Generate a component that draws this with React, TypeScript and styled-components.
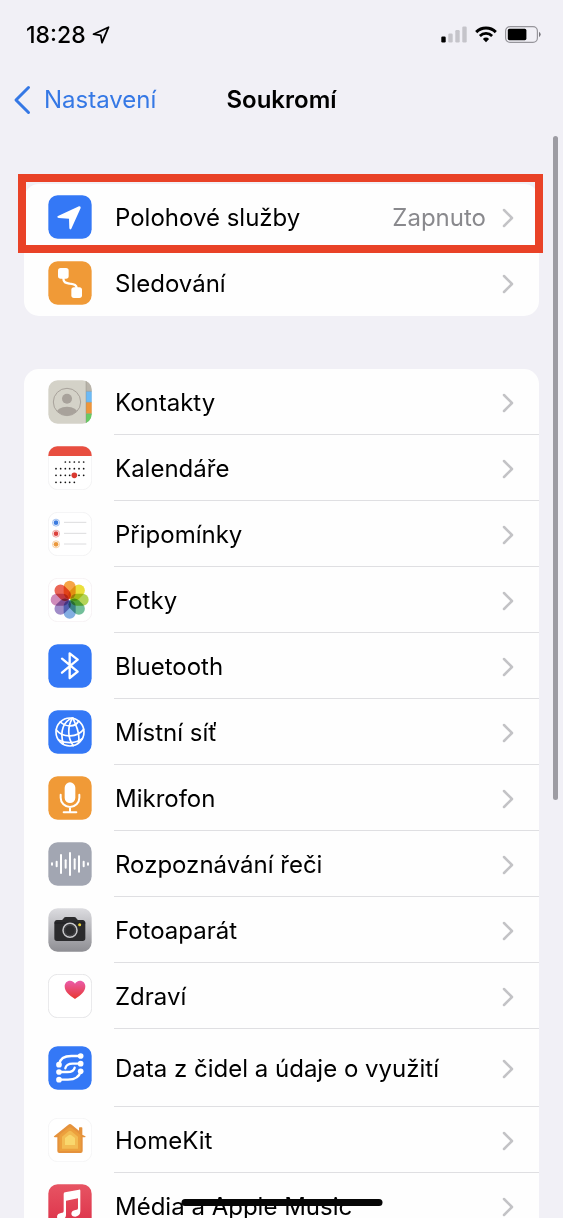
import React from "react";
import styled, { createGlobalStyle } from "styled-components";

const GlobalStyle = createGlobalStyle`
  * { box-sizing: border-box; }
  body { margin: 0; background: #f1f0f6; }
`;

const Screen = styled.div`
  position: relative;
  display: flex;
  flex-direction: column;
  height: 100vh;
  overflow: hidden;
  background: #f1f0f6;
  color: #000;
  font-family: Inter, "Liberation Sans", sans-serif;
`;

const StatusBar = styled.div`
  display: flex;
  align-items: center;
  justify-content: space-between;
  flex: none;
  height: 69px;
  padding: 0 22px 0 26px;
`;

const StatusGroup = styled.div<{ $gap: number }>`
  display: flex;
  align-items: center;
  gap: ${(p) => p.$gap}px;
`;

const Clock = styled.span`
  font-size: 23px;
  font-weight: 500;
  line-height: 28px;
`;

const NavBar = styled.header`
  display: grid;
  grid-template-columns: 1fr auto 1fr;
  align-items: center;
  flex: none;
  height: 61px;
  padding: 0 13px;
`;

const BackLink = styled.a`
  display: flex;
  align-items: center;
  gap: 13px;
  color: #3578e5;
  font-size: 24px;
  line-height: 32px;
  text-decoration: none;
`;

const Title = styled.h1`
  margin: 0;
  font-size: 24px;
  font-weight: 600;
  line-height: 32px;
`;

const Content = styled.main`
  flex: 1;
  min-height: 0;
  padding: 54px 24px 0;
  overflow-y: auto;
  scrollbar-width: none;
`;

const Card = styled.ul`
  margin: 0;
  padding: 0;
  border-radius: 15px;
  background: #fefefe;
  list-style: none;
`;

const Section = styled.section`
  position: relative;
  margin-bottom: 53px;
`;

const Row = styled.a<{ $tall?: boolean }>`
  display: flex;
  align-items: center;
  gap: 22px;
  height: ${(p) => (p.$tall ? 78 : 66)}px;
  padding-left: 24px;
  color: inherit;
  text-decoration: none;
`;

const RowBody = styled.span`
  display: flex;
  align-items: center;
  gap: 16px;
  flex: 1;
  height: 100%;
  padding: 2px 25px 0 1px;
  border-bottom: 1px solid #dfdfe2;
  font-size: 24px;
  line-height: 32px;

  li:last-child & { border-bottom-color: transparent; }
`;

const Label = styled.span`
  flex: 1;
  white-space: nowrap;
`;

const Value = styled.span`
  color: #89898d;
`;

const Highlight = styled.div`
  position: absolute;
  inset: -10px -4px auto -6px;
  height: 79px;
  border: 8px solid #e94227;
  pointer-events: none;
`;

const ScrollThumb = styled.div`
  position: absolute;
  top: 136px;
  right: 5px;
  width: 5px;
  height: 664px;
  border-radius: 3px;
  background: #9d9ca3;
`;

const HomeIndicator = styled.div`
  position: absolute;
  bottom: 12px;
  left: 50%;
  width: 201px;
  height: 7px;
  border-radius: 4px;
  background: #060606;
  transform: translateX(-50%);
`;

const IconSvg = styled.svg`
  display: block;
  flex: none;
  width: 44px;
  height: 44px;
`;

const Petal = styled.rect`
  mix-blend-mode: multiply;
`;

const Flower = styled.g`
  isolation: isolate;
`;

type TileProps = { fill: string; stroke?: string; children?: React.ReactNode };

const Tile = ({ fill, stroke, children }: TileProps) => (
  <IconSvg viewBox="0 0 132 132" aria-hidden="true">
    <rect x="1" y="1" width="130" height="130" rx="28" fill={fill} stroke={stroke} strokeWidth={stroke ? 2 : 0} />
    {children}
  </IconSvg>
);

const BLUE = "#3478f6";
const ORANGE = "#f09a37";

const LocationIcon = () => (
  <Tile fill={BLUE}>
    <path d="M30 63 L93 34 Q99 33 98 39 L70 101 Q66 106 64 100 L63 71 L32 69 Q25 67 30 63Z" fill="#fff" />
  </Tile>
);

const TrackingIcon = () => (
  <Tile fill={ORANGE}>
    <rect x="30" y="21" width="32" height="32" rx="8" fill="#fff" />
    <rect x="70" y="79" width="32" height="32" rx="8" fill="#fff" />
    <path d="M46 50 C46 66 54 66 66 68 C80 70 86 72 86 82" fill="none" stroke="#fff" strokeWidth="7" />
  </Tile>
);

const ContactsIcon = () => (
  <IconSvg viewBox="0 0 132 132" aria-hidden="true">
    <defs>
      <clipPath id="contacts-tile"><rect x="1" y="1" width="130" height="130" rx="28" /></clipPath>
      <clipPath id="contacts-face"><circle cx="57" cy="66" r="40" /></clipPath>
    </defs>
    <g clipPath="url(#contacts-tile)">
      <rect width="132" height="132" fill="#d4d2c8" />
      <rect x="114" width="18" height="34" fill="#b9b4aa" />
      <rect x="114" y="34" width="18" height="33" fill="#6cbaf6" />
      <rect x="114" y="67" width="18" height="34" fill="#ee953a" />
      <rect x="114" y="101" width="18" height="31" fill="#66cc62" />
      <path d="M114 0V132M114 34H132M114 67H132M114 101H132" stroke="#8d8a80" strokeWidth="2" opacity=".6" />
    </g>
    <circle cx="57" cy="66" r="41" fill="none" stroke="#a8a29b" strokeWidth="3" />
    <g clipPath="url(#contacts-face)" fill="#a8a29b">
      <circle cx="57" cy="56" r="15" />
      <ellipse cx="57" cy="101" rx="33" ry="21" />
    </g>
  </IconSvg>
);

const CALENDAR_COLUMNS = [24, 38, 52, 65, 79, 93, 107];
const CALENDAR_ROWS = [
  { y: 48, from: 2, to: 7 },
  { y: 68, from: 0, to: 7 },
  { y: 88, from: 0, to: 7 },
  { y: 109, from: 0, to: 5 },
];

const CalendarIcon = () => (
  <Tile fill="#fff" stroke="#ededee">
    <path d="M1 30V28A27 27 0 0 1 28 1H104A27 27 0 0 1 131 28V30Z" fill="#e84e40" />
    {CALENDAR_ROWS.map((row) =>
      CALENDAR_COLUMNS.slice(row.from, row.to).map((x) => (
        <circle key={`${x}-${row.y}`} cx={x} cy={row.y} r="2.6" fill="#111" />
      )),
    )}
    <circle cx="79" cy="88" r="8.5" fill="#d93a30" />
  </Tile>
);

const RemindersIcon = () => (
  <Tile fill="#fff" stroke="#ededee">
    {[{ y: 32, c: "#3b7be0" }, { y: 65, c: "#dc3f3b" }, { y: 97, c: "#eb983b" }].map(({ y, c }) => (
      <g key={y}>
        <circle cx="24" cy={y} r="10.5" fill="#fff" stroke={c} strokeWidth="2" opacity=".7" />
        <circle cx="24" cy={y} r="7" fill={c} />
        <path d={`M48 ${y - 1}H115`} stroke="#dcdcde" strokeWidth="3" />
      </g>
    ))}
  </Tile>
);

const PETALS = ["#f6a445", "#ebe03c", "#b3d458", "#72bf9a", "#83aee2", "#a08cc8", "#cf8bba", "#ea6657"];

const PhotosIcon = () => (
  <Tile fill="#fff" stroke="#f2ecee">
    <Flower>
      {PETALS.map((color, i) => (
        <Petal
          key={color}
          x="47"
          y="8"
          width="36"
          height="55"
          rx="18"
          fill={color}
          transform={`rotate(${i * 45} 65 65)`}
        />
      ))}
    </Flower>
  </Tile>
);

const BluetoothIcon = () => (
  <Tile fill={BLUE}>
    <path d="M42 44 L89 83 L65 102 V28 L89 47 L42 86" fill="none" stroke="#fff" strokeWidth="7" strokeLinejoin="round" strokeLinecap="round" />
  </Tile>
);

const NetworkIcon = () => (
  <Tile fill={BLUE}>
    <g fill="none" stroke="#fff" strokeWidth="5" strokeLinecap="round">
      <circle cx="66" cy="66" r="42" />
      <path d="M72 24 C48 34 34 62 46 102" />
      <path d="M74 24 C58 48 58 84 76 107" />
      <path d="M76 25 C78 40 100 64 91 99" />
      <path d="M37 36 C54 52 82 52 92 33" />
      <path d="M25 60 C44 84 88 84 107 58" />
      <path d="M32 90 C52 100 82 102 103 86" />
    </g>
  </Tile>
);

const MicrophoneIcon = () => (
  <Tile fill={ORANGE}>
    <rect x="50" y="19" width="32" height="62" rx="16" fill="#fff" />
    <path d="M38 56V65A28 28 0 0 0 94 65V56M66 93V108M47 109H85" fill="none" stroke="#fff" strokeWidth="6" strokeLinecap="round" />
  </Tile>
);

const WAVE = [
  [12, 5], [26, 10], [39, 30], [53, 14], [66, 36], [80, 17], [93, 26], [107, 10], [120, 5],
];

const SpeechIcon = () => (
  <Tile fill="#a2a6b2">
    {WAVE.map(([x, half]) => (
      <path key={x} d={`M${x} ${66 - half + 3}V${66 + half - 3}`} stroke="#fff" strokeWidth="6" strokeLinecap="round" />
    ))}
  </Tile>
);

const CameraIcon = () => (
  <Tile fill="url(#camera-tile)">
    <defs>
      <linearGradient id="camera-tile" x1="0" y1="0" x2="0" y2="1">
        <stop offset="0" stopColor="#dcdce0" />
        <stop offset="1" stopColor="#8e8e93" />
      </linearGradient>
    </defs>
    <path d="M19 45Q19 37 27 36H42Q45 35 47 31Q49 27 54 27H78Q83 27 85 31Q87 35 90 36H104Q112 37 112 45V91Q112 99 104 99H27Q19 99 19 91Z" fill="#2b2b2d" />
    <path d="M19 45H112" stroke="#19191b" strokeWidth="2" />
    <circle cx="66" cy="67" r="21" fill="#29292b" stroke="#c8c8cb" strokeWidth="4.5" />
    <circle cx="66" cy="67" r="16" fill="#2b2b2d" stroke="#58585c" strokeWidth="2" />
    <circle cx="95" cy="50" r="4.5" fill="#e9d33a" />
  </Tile>
);

const HealthIcon = () => (
  <Tile fill="#fff" stroke="#d9d9dc">
    <defs>
      <linearGradient id="heart" x1="0" y1="0" x2="0" y2="1">
        <stop offset="0" stopColor="#ea5cab" />
        <stop offset="1" stopColor="#e8372f" />
      </linearGradient>
    </defs>
    <path d="M81 75C64 64 50 53 50 37C50 27 57 20 66 20C73 20 78 24 81 29C84 24 89 20 96 20C105 20 112 27 112 37C112 53 98 64 81 75Z" fill="url(#heart)" />
  </Tile>
);

const SensorIcon = () => (
  <Tile fill={BLUE}>
    <g fill="none" stroke="#fff" strokeWidth="7" strokeLinecap="round">
      <path d="M33 55C36 38 50 30 70 30H98" />
      <path d="M52 67C54 57 62 53 74 53H98" />
      <path d="M33 78H58C70 78 78 74 80 65" />
      <path d="M33 101H60C80 101 94 94 98 76" />
    </g>
    {[[98, 30], [33, 56], [98, 53], [33, 78], [98, 76], [33, 101]].map(([x, y]) => (
      <circle key={`${x}-${y}`} cx={x} cy={y} r="8.5" fill="#fff" />
    ))}
  </Tile>
);

const HomeIcon = () => (
  <Tile fill="#fff" stroke="#f0f0f1">
    <path d="M93 42V30Q93 28 95 28H101Q103 28 103 30V50L112 55Q115 58 110 58H104V99Q104 105 98 105H34Q28 105 28 99V58H20Q15 57 19 54L61 20Q66 16 71 20L93 38Z" fill="#e5923c" />
    <path d="M34 51L62 29Q66 26 70 29L98 51V99H34Z" fill="#eca03d" />
    <path d="M42 56L62 40Q66 37 70 40L90 56V92H42Z" fill="#f3bb52" />
    <path d="M51 60L63 51Q66 49 69 51L81 60V81H51Z" fill="#f9d76d" />
  </Tile>
);

const MusicIcon = () => (
  <Tile fill="url(#music-tile)">
    <defs>
      <linearGradient id="music-tile" x1="0" y1="0" x2="0" y2="1">
        <stop offset="0" stopColor="#e75463" />
        <stop offset="1" stopColor="#dc3048" />
      </linearGradient>
    </defs>
    <path d="M47 30Q47 26 51 25L93 17Q97 16 97 20V82C97 92 91 97 82 98C75 98 70 95 70 89C70 82 76 79 82 78C88 77 90 76 90 71V43L54 50V92C54 101 48 106 39 107C31 107 27 103 27 98C27 91 33 88 39 87C45 86 47 85 47 80Z" fill="#fff" />
  </Tile>
);

const Chevron = () => (
  <svg width="12" height="20" viewBox="0 0 12 20" fill="none" aria-hidden="true">
    <path d="M2 2 L10 10 L2 18" stroke="#c3c3c6" strokeWidth="2.5" strokeLinecap="round" strokeLinejoin="round" />
  </svg>
);

type Item = { label: string; icon: React.ComponentType; value?: string; tall?: boolean };

const SERVICES: Item[] = [
  { label: "Polohové služby", icon: LocationIcon, value: "Zapnuto" },
  { label: "Sledování", icon: TrackingIcon },
];

const APPS: Item[] = [
  { label: "Kontakty", icon: ContactsIcon },
  { label: "Kalendáře", icon: CalendarIcon },
  { label: "Připomínky", icon: RemindersIcon },
  { label: "Fotky", icon: PhotosIcon },
  { label: "Bluetooth", icon: BluetoothIcon },
  { label: "Místní síť", icon: NetworkIcon },
  { label: "Mikrofon", icon: MicrophoneIcon },
  { label: "Rozpoznávání řeči", icon: SpeechIcon },
  { label: "Fotoaparát", icon: CameraIcon },
  { label: "Zdraví", icon: HealthIcon },
  { label: "Data z čidel a údaje o využití", icon: SensorIcon, tall: true },
  { label: "HomeKit", icon: HomeIcon },
  { label: "Média a Apple Music", icon: MusicIcon },
];

const SettingsRow = ({ label, icon: Icon, value, tall }: Item) => (
  <li>
    <Row href="#" $tall={tall}>
      <Icon />
      <RowBody>
        <Label>{label}</Label>
        {value && <Value>{value}</Value>}
        <Chevron />
      </RowBody>
    </Row>
  </li>
);

export default function App() {
  return (
    <Screen>
      <GlobalStyle />
      <StatusBar>
        <StatusGroup $gap={6}>
          <Clock>18:28</Clock>
          <svg width="18" height="18" viewBox="0 0 18 18" fill="none" aria-hidden="true">
            <path d="M1.5 8.2 L16.5 1.2 L10 16.6 L8.8 9.3 Z" stroke="#000" strokeWidth="1.8" strokeLinejoin="round" />
          </svg>
        </StatusGroup>
        <StatusGroup $gap={8}>
          <svg width="26" height="17" viewBox="0 0 26 17" aria-hidden="true">
            <rect x="0.3" y="10.5" width="4.4" height="6" rx="1.2" fill="#000" />
            <rect x="7.3" y="7.5" width="4.4" height="9" rx="1.2" fill="#c5c4ca" />
            <rect x="14.3" y="4" width="4.4" height="12.5" rx="1.2" fill="#c5c4ca" />
            <rect x="21.3" y="0.5" width="4.4" height="16" rx="1.2" fill="#c5c4ca" />
          </svg>
          <svg width="22" height="17" viewBox="0 0 22 17" fill="none" aria-hidden="true">
            <path d="M1.2 6.1 A14 14 0 0 1 20.8 6.1" stroke="#000" strokeWidth="3" />
            <path d="M4.9 9.9 A8.7 8.7 0 0 1 17.1 9.9" stroke="#000" strokeWidth="2.8" />
            <path d="M7.9 12.9 A4.4 4.4 0 0 1 14.1 12.9 L11 16.2 Z" fill="#000" />
          </svg>
          <svg width="36" height="17" viewBox="0 0 36 17" aria-hidden="true">
            <rect x="0.6" y="0.6" width="31.8" height="15.8" rx="4.4" fill="none" stroke="#96959b" strokeWidth="1.2" />
            <rect x="2.8" y="2.8" width="18.6" height="11.4" rx="1.6" fill="#000" />
            <path d="M34 5.8 Q37.4 8.5 34 11.2 Z" fill="#77767c" />
          </svg>
        </StatusGroup>
      </StatusBar>
      <NavBar>
        <BackLink href="#">
          <svg width="18" height="30" viewBox="0 0 18 30" fill="none" aria-hidden="true">
            <path d="M15.5 2.5 L3 15 L15.5 27.5" stroke="#3578e5" strokeWidth="3" strokeLinecap="round" strokeLinejoin="round" />
          </svg>
          Nastavení
        </BackLink>
        <Title>Soukromí</Title>
      </NavBar>
      <Content>
        <Section>
          <Card>
            {SERVICES.map((item) => (
              <SettingsRow key={item.label} {...item} />
            ))}
          </Card>
          <Highlight />
        </Section>
        <Section>
          <Card>
            {APPS.map((item) => (
              <SettingsRow key={item.label} {...item} />
            ))}
          </Card>
        </Section>
      </Content>
      <ScrollThumb />
      <HomeIndicator />
    </Screen>
  );
}
